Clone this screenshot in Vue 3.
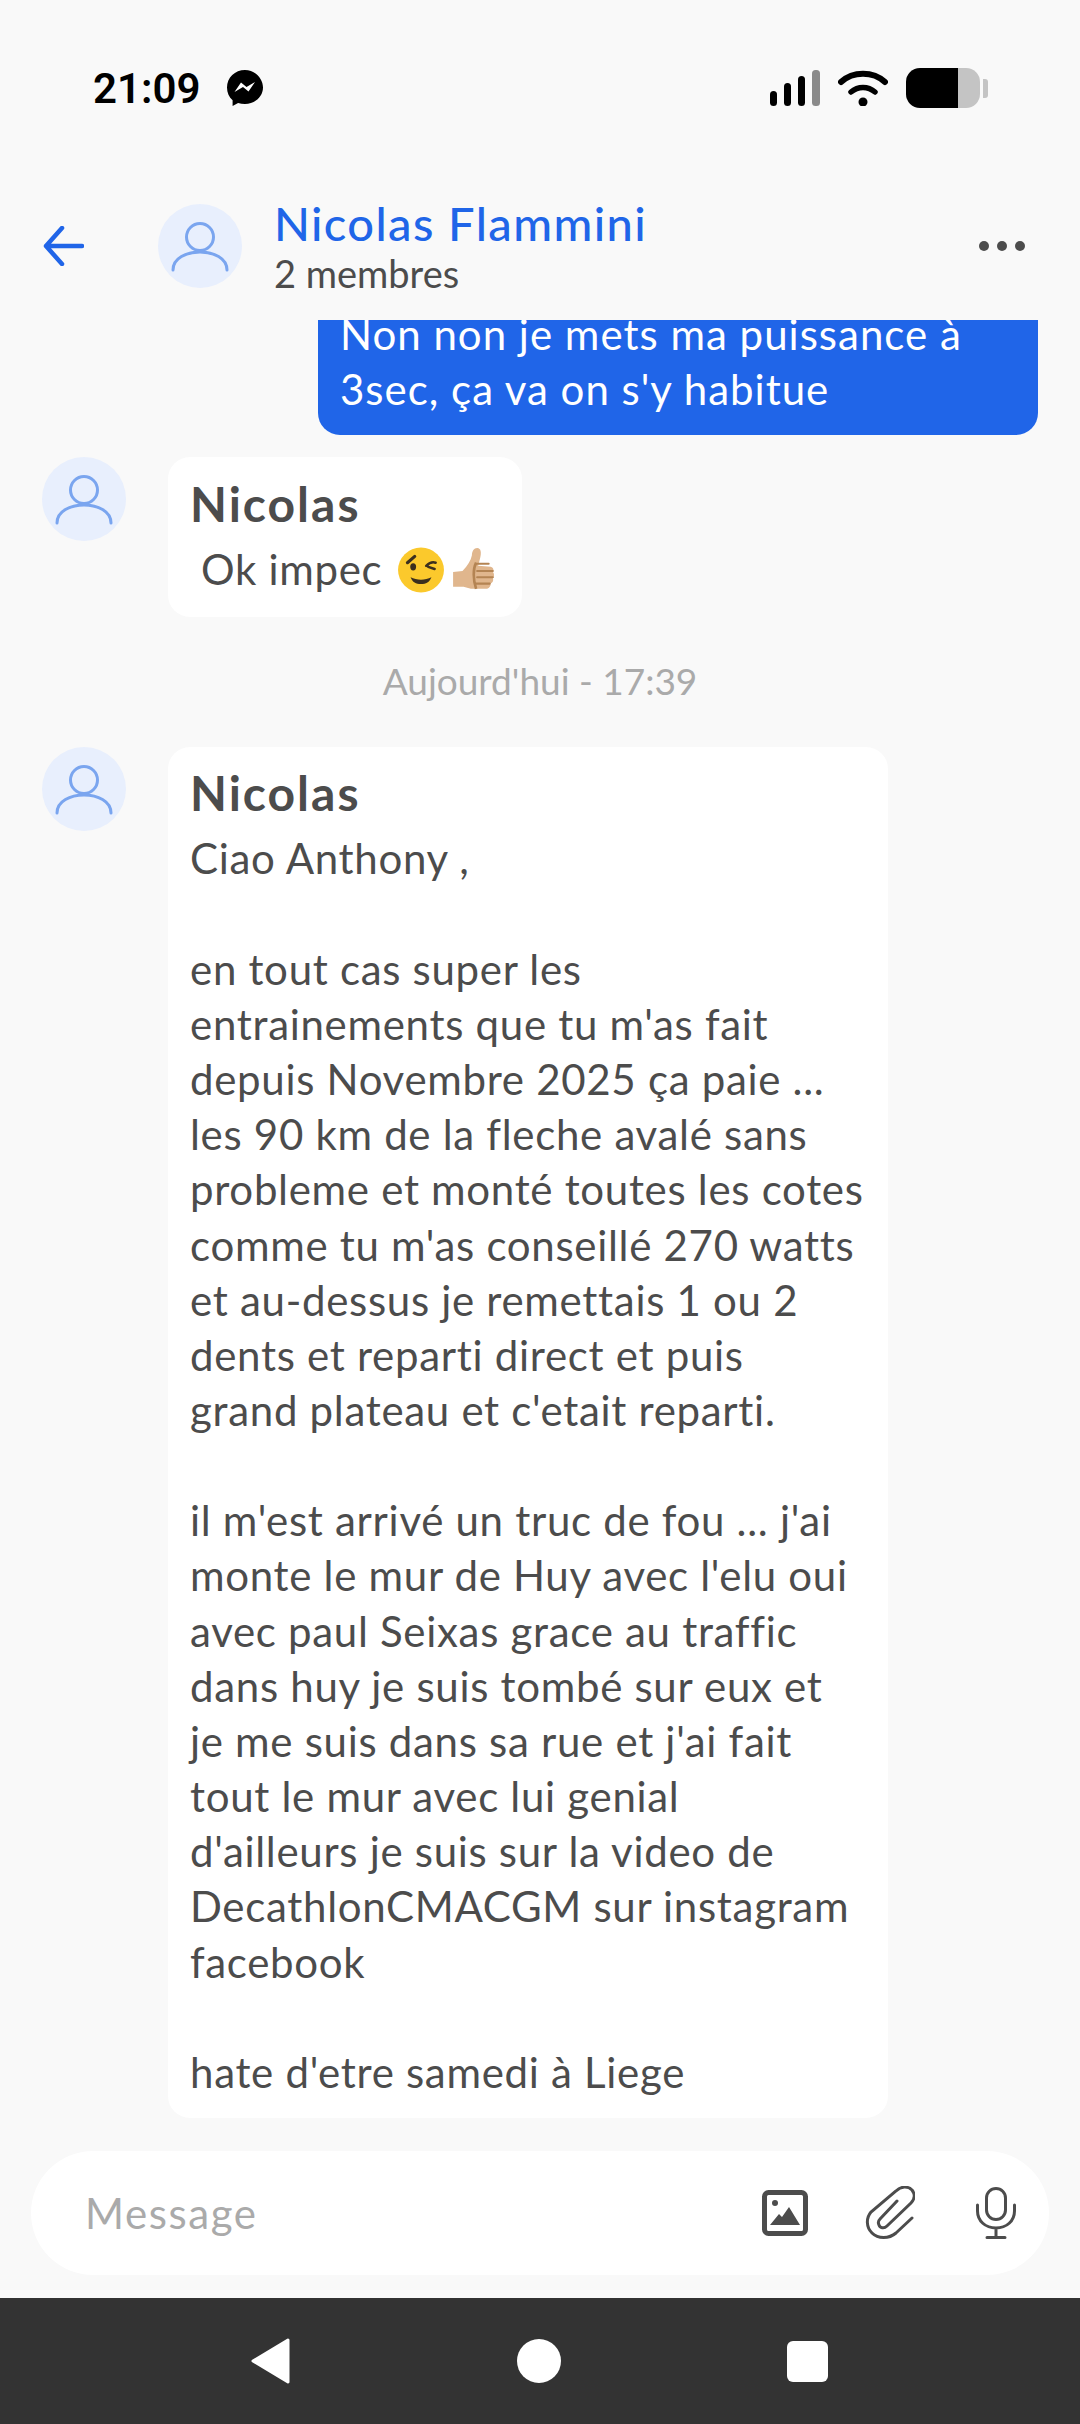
<template>
  <div class="screen">
    <div class="status">
      <div class="status-left">
        <span class="clock">21:09</span>
        <svg class="messenger" viewBox="0 0 36 36" width="36" height="36">
          <path d="M18 0C8 0 0 7.500 0 17.500c0 5.200 2.100 9.700 5.600 12.800v5.700l5.500-3c2.100.7 4.400 1 6.900 1 10 0 18-7.500 18-16.500S28 0 18 0z" fill="#000" />
          <path d="M7.500 22l6.500-9.500 5.500 4.500 8.500-5-6.500 9.500-5.500-4.500z" fill="#fff" />
        </svg>
      </div>
      <div class="status-right">
        <svg viewBox="0 0 50 36" width="50" height="36">
          <rect x="0" y="21" width="7" height="15" rx="3.500" fill="#000" />
          <rect x="14" y="13" width="7" height="23" rx="3.500" fill="#000" />
          <rect x="28" y="6" width="7" height="30" rx="3.500" fill="#000" />
          <rect x="42" y="0" width="8" height="36" rx="3.500" fill="#8a8a8a" />
        </svg>
        <svg viewBox="0 0 50 36" width="50" height="36">
          <path d="M3 12C15 1 35 1 47 12" fill="none" stroke="#000" stroke-width="6" stroke-linecap="round" />
          <path d="M13 22C20 16 30 16 37 22" fill="none" stroke="#000" stroke-width="5.500" stroke-linecap="round" />
          <circle cx="25" cy="32" r="4.500" fill="#000" />
        </svg>
        <div class="battery">
          <div class="battery-fill"></div>
          <div class="battery-rest"></div>
          <div class="battery-nub"></div>
        </div>
      </div>
    </div>

    <header class="topbar">
      <svg class="back" viewBox="0 0 41 40" width="41" height="40">
        <path d="M19 2L3 20l16 18M3 20h36" fill="none" stroke="#2065e8" stroke-width="4.500" stroke-linecap="round" stroke-linejoin="round" />
      </svg>
      <div class="avatar">
        <svg viewBox="0 0 84 84" width="84" height="84">
          <circle cx="42" cy="33" r="13.500" fill="none" stroke="#7aa5ef" stroke-width="3" />
          <path d="M15 66c0-24 54-24 54 0" fill="none" stroke="#7aa5ef" stroke-width="3" stroke-linecap="round" />
        </svg>
      </div>
      <div class="titles">
        <div class="title">Nicolas Flammini</div>
        <div class="subtitle">2 membres</div>
      </div>
      <div class="dots"><i></i><i></i><i></i></div>
    </header>

    <main class="thread">
      <div class="bubble-mine">
        <p>Non non je mets ma puissance à</p>
        <p>3sec, ça va on s'y habitue</p>
      </div>

      <div class="row first">
        <div class="avatar">
          <svg viewBox="0 0 84 84" width="84" height="84">
            <circle cx="42" cy="33" r="13.500" fill="none" stroke="#7aa5ef" stroke-width="3" />
            <path d="M15 66c0-24 54-24 54 0" fill="none" stroke="#7aa5ef" stroke-width="3" stroke-linecap="round" />
          </svg>
        </div>
        <div class="bubble short">
          <div class="sender">Nicolas</div>
          <p class="ok">
            <span class="ok-text">Ok impec</span>
            <svg class="emoji" viewBox="0 0 46 44" width="48" height="46">
              <ellipse cx="23" cy="22" rx="22" ry="21.500" fill="#fbc92c" />
              <path d="M10 15l7-6" stroke="#3b2f1e" stroke-width="3" stroke-linecap="round" />
              <ellipse cx="15.500" cy="19" rx="2.800" ry="3.500" fill="#3b2f1e" />
              <path d="M28 18c3-3 6-4 9-3M30 19l6 2" fill="none" stroke="#3b2f1e" stroke-width="2.500" stroke-linecap="round" />
              <path d="M13 29c6 3 14 3 20 0-2 5-5 6.500-10 6.500S15 34 13 29z" fill="#3b2f1e" />
            </svg>
            <svg class="emoji" viewBox="0 0 42 44" width="44" height="46">
              <path d="M1 24l9-1c5-5 8-10 9-15 0-4 2-7 5-7 4 0 4 5 3 9l-2 8 12 1c3 1 3 4 2 5 2 2 1 5 0 6 1 2 0 4-2 5 0 3-2 5-4 5H18l-7-2H1z" fill="#e0b68d" />
              <path d="M23 16h12M24 23h15M24 29h15M23 35h13" stroke="#b48453" stroke-width="2" stroke-linecap="round" />
              <path d="M23 15c-3 6-3 16 0 25" fill="none" stroke="#b48453" stroke-width="2.500" />
            </svg>
          </p>
        </div>
      </div>

      <div class="stamp">Aujourd'hui - 17:39</div>

      <div class="row">
        <div class="avatar">
          <svg viewBox="0 0 84 84" width="84" height="84">
            <circle cx="42" cy="33" r="13.500" fill="none" stroke="#7aa5ef" stroke-width="3" />
            <path d="M15 66c0-24 54-24 54 0" fill="none" stroke="#7aa5ef" stroke-width="3" stroke-linecap="round" />
          </svg>
        </div>
        <div class="bubble wide">
          <div class="sender">Nicolas</div>
          <p v-for="(line, i) in lines" :key="i" class="line">{{ line }}</p>
        </div>
      </div>
    </main>

    <div class="composer">
      <span class="placeholder">Message</span>
      <svg class="c-image" viewBox="0 0 46 46" width="46" height="46">
        <rect x="2.500" y="2.500" width="41" height="41" rx="4" fill="none" stroke="#4c4c4c" stroke-width="5" />
        <circle cx="13" cy="13" r="3" fill="#4c4c4c" />
        <path d="M8 35l9-11 3 3 7-10 11 18z" fill="#4c4c4c" />
      </svg>
      <svg class="c-clip" viewBox="0 0 50 54" width="50" height="54">
        <path d="M47 32L31 47C24 53 13 53 7 47C1 41 1 32 6 26L31 5C36 0 43 0 47 4C50 8 50 13 46 17L22 40C19 43 15 42 14 39C13 37 13 35 15 33L32 15" fill="none" stroke="#4c4c4c" stroke-width="3" stroke-linecap="round" />
      </svg>
      <svg class="c-mic" viewBox="0 0 40 52" width="40" height="52">
        <rect x="10.500" y="1.500" width="19" height="31" rx="9.500" fill="none" stroke="#4c4c4c" stroke-width="3" />
        <path d="M1.500 18v6c0 10 8 17 18.500 17s18.500-7 18.500-17v-6M20 41v9M11 50.500h18" fill="none" stroke="#4c4c4c" stroke-width="3" stroke-linecap="round" />
      </svg>
    </div>

    <nav class="navbar">
      <svg viewBox="0 0 40 46" width="40" height="46">
        <path d="M38 2L3 23l35 21z" fill="#fff" stroke="#fff" stroke-width="3" stroke-linejoin="round" />
      </svg>
      <i class="nav-circle"></i>
      <i class="nav-square"></i>
    </nav>
  </div>
</template>

<script setup>
const lines = [
  "Ciao Anthony ,",
  "\u00a0",
  "en tout cas super les",
  "entrainements que tu m'as fait",
  "depuis Novembre 2025 ça paie ...",
  "les 90 km de la fleche avalé sans",
  "probleme et monté toutes les cotes",
  "comme tu m'as conseillé 270 watts",
  "et au-dessus je remettais 1 ou 2",
  "dents et reparti direct et puis",
  "grand plateau et c'etait reparti.",
  "\u00a0",
  "il m'est arrivé un truc de fou ... j'ai",
  "monte le mur de Huy avec l'elu oui",
  "avec paul Seixas grace au traffic",
  "dans huy je suis tombé sur eux et",
  "je me suis dans sa rue et j'ai fait",
  "tout le mur avec lui genial",
  "d'ailleurs je suis sur la video de",
  "DecathlonCMACGM sur instagram",
  "facebook",
  "\u00a0",
  "hate d'etre samedi à Liege",
];
</script>

<style>
html,
body {
  margin: 0;
  background: #f9f9f9;
}
</style>

<style scoped>
.screen {
  width: 1080px;
  height: 2424px;
  display: flex;
  flex-direction: column;
  background: #f9f9f9;
  font-family: Lato, "Noto Sans", sans-serif;
  color: #4c4c4c;
  overflow: hidden;
}
p {
  margin: 0;
}
.status {
  flex: none;
  height: 40px;
  margin: 68px 0 32px;
  padding: 0 92px 0 93px;
  display: flex;
  justify-content: space-between;
  align-items: center;
}
.status-left {
  display: flex;
  align-items: center;
  gap: 27px;
}
.clock {
  font-family: Roboto, sans-serif;
  font-size: 42px;
  font-weight: 600;
  color: #000;
  width: 107px;
}
.status-right {
  display: flex;
  align-items: center;
  gap: 18px;
}
.battery {
  display: flex;
  align-items: center;
  height: 40px;
}
.battery-fill {
  width: 52px;
  height: 40px;
  background: #000;
  border-radius: 14px 0 0 14px;
}
.battery-rest {
  width: 22px;
  height: 40px;
  background: #c4c4c4;
  border-radius: 0 14px 14px 0;
}
.battery-nub {
  width: 5px;
  height: 19px;
  margin-left: 3px;
  background: #c4c4c4;
  border-radius: 0 3px 3px 0;
}
.topbar {
  flex: none;
  box-sizing: border-box;
  height: 180px;
  padding: 32px 55px 0 43px;
  display: flex;
  align-items: center;
}
.back {
  margin-right: 74px;
}
.avatar {
  width: 84px;
  height: 84px;
  flex: none;
  border-radius: 50%;
  background: #e8effd;
}
.titles {
  flex: 1;
  margin-left: 32px;
  margin-top: -2px;
}
.title {
  font-size: 47px;
  font-weight: 500;
  line-height: 56px;
  color: #2065e8;
  letter-spacing: 1.4px;
}
.subtitle {
  font-size: 38px;
  line-height: 44px;
}
.dots {
  display: flex;
  gap: 8px;
}
.dots i {
  width: 10px;
  height: 10px;
  border-radius: 50%;
  background: #4c4c4c;
}
.thread {
  flex: 1;
  min-height: 0;
  display: flex;
  flex-direction: column;
  justify-content: flex-end;
  padding: 0 42px 33px;
  overflow: hidden;
}
.bubble-mine {
  align-self: flex-end;
  flex: none;
  width: 720px;
  box-sizing: border-box;
  padding: 30px 22px 18px;
  background: #2065e8;
  color: #fff;
  border-radius: 22px;
  font-size: 42px;
  line-height: 55px;
  letter-spacing: 1px;
  white-space: nowrap;
}
.row {
  display: flex;
  flex: none;
  gap: 42px;
  align-items: flex-start;
}
.row.first {
  margin-top: 22px;
}
.bubble {
  background: #fff;
  border-radius: 22px;
  padding: 18px 22px;
  white-space: nowrap;
}
.bubble.short {
  box-sizing: border-box;
  width: 354px;
  padding: 19px 22px 20px;
}
.bubble.wide {
  width: 720px;
  box-sizing: border-box;
}
.sender {
  font-size: 48px;
  font-weight: 700;
  line-height: 56px;
  letter-spacing: 2px;
  margin-bottom: 10px;
}
.ok {
  display: flex;
  align-items: center;
  font-size: 42px;
  line-height: 55px;
  padding-left: 11px;
  letter-spacing: 0.7px;
}
.ok-text {
  width: 196px;
}
.ok .emoji + .emoji {
  margin-left: 7px;
}
.stamp {
  flex: none;
  height: 130px;
  line-height: 128px;
  text-align: center;
  font-size: 37px;
  color: #aaa;
}
.line {
  font-size: 42px;
  line-height: 55.15px;
  letter-spacing: 0.7px;
}
.composer {
  flex: none;
  margin: 0 31px;
  height: 124px;
  background: #fff;
  border-radius: 62px;
  display: flex;
  align-items: center;
  padding: 0 33px 0 54px;
}
.placeholder {
  flex: 1;
  font-size: 42px;
  color: #aaa;
  letter-spacing: 1.6px;
}
.c-image {
  margin-right: 57px;
}
.c-clip {
  margin-right: 61px;
}
.navbar {
  flex: none;
  margin-top: 23px;
  height: 126px;
  background: #333;
  display: flex;
  align-items: center;
  padding-left: 250px;
}
.nav-circle {
  width: 44px;
  height: 44px;
  margin-left: 227px;
  border-radius: 50%;
  background: #fff;
}
.nav-square {
  width: 41px;
  height: 41px;
  margin-left: 226px;
  border-radius: 6px;
  background: #fff;
}
</style>
